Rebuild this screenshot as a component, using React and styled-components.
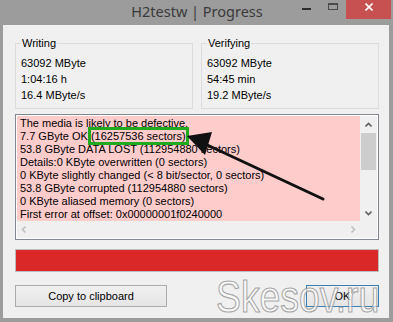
import React from 'react';
import styled, { createGlobalStyle } from 'styled-components';

const Global = createGlobalStyle`
  html, body {
    margin: 0;
    padding: 0;
    background: #9c9c9c;
  }
  * {
    box-sizing: border-box;
  }
`;

const Frame = styled.div`
  position: relative;
  width: 393px;
  height: 322px;
  background: #9c9c9c;
  display: flex;
  flex-direction: column;
  padding: 0 4px 4px 3px;
  font-family: "Liberation Sans", Arial, sans-serif;
  font-size: 11px;
  color: #000;
  overflow: hidden;
`;

const TitleBar = styled.div`
  height: 25px;
  margin-right: -2px;
  display: grid;
  grid-template-columns: 1fr auto 1fr;
  align-items: start;
`;

const Title = styled.div`
  grid-column: 2;
  font-family: "Noto Sans", "Open Sans", sans-serif;
  font-size: 14.5px;
  line-height: 23px;
  color: #3a3a3a;
`;

const Controls = styled.div`
  grid-column: 3;
  justify-self: end;
  display: flex;
`;

const CtrlButton = styled.div`
  width: ${p => p.$w}px;
  height: 19px;
  display: flex;
  justify-content: center;
  padding-top: 3px;
  background: ${p => (p.$close ? '#c75050' : 'transparent')};
`;

const Client = styled.div`
  flex: 1;
  background: #f0f0f0;
  display: flex;
  flex-direction: column;
  padding: 11px 10px 0 12px;
`;

const Groups = styled.div`
  display: grid;
  grid-template-columns: 1fr 1fr;
  gap: 8px;
`;

const Group = styled.fieldset`
  margin: 0;
  min-width: 0;
  padding: 5px 5px 5px 5px;
  border: 1px solid #dcdcdc;
`;

const Legend = styled.legend`
  padding: 0 1px;
  line-height: 14px;
`;

const Value = styled.div`
  line-height: 16px;
  white-space: nowrap;
`;

const Report = styled.div`
  margin-top: 5px;
  height: 126px;
  border: 1px solid #828790;
  background: #fff;
  padding: 1px;
  display: grid;
  grid-template-columns: 1fr 17px;
  grid-template-rows: 1fr 17px;
`;

const ReportText = styled.div`
  background: #ffcccc;
  padding: 1px 0 0 3px;
  line-height: 13px;
  white-space: nowrap;
  overflow: hidden;
`;

const Marked = styled.span`
  outline: 3px solid #1faa1f;
  outline-offset: 0;
`;

const VScroll = styled.div`
  background: #f0f0f0;
  display: flex;
  flex-direction: column;
`;

const ArrowCell = styled.div`
  height: 17px;
  display: flex;
  align-items: center;
  justify-content: center;
`;

const Thumb = styled.div`
  height: 37px;
  margin: 0 1px;
  background: #cdcdcd;
`;

const Spacer = styled.div`
  flex: 1;
`;

const HScroll = styled.div`
  background: #f0f0f0;
  display: flex;
  justify-content: space-between;
  align-items: center;
  padding: 0 4px 0 4px;
`;

const Corner = styled.div`
  background: #f0f0f0;
`;

const Progress = styled.div`
  margin-top: 9px;
  height: 23px;
  border: 1px solid #bcbcbc;
  background: #da2727;
`;

const Buttons = styled.div`
  margin-top: 13px;
  display: flex;
  justify-content: space-between;
`;

const Button = styled.div`
  width: ${p => p.$w}px;
  height: 22px;
  display: flex;
  align-items: center;
  justify-content: center;
  border: 1px solid ${p => (p.$default ? '#3c7fb1' : '#acacac')};
  background: linear-gradient(#f0f0f0, #e5e5e5);
  font-size: 11px;
`;

const Watermark = styled.div`
  position: absolute;
  left: 216px;
  top: 274px;
  font-family: "Liberation Sans", Arial, sans-serif;
  font-size: 45px;
  line-height: 1;
  color: rgba(255, 255, 255, 0.6);
  -webkit-text-stroke: 1.2px rgba(140, 140, 140, 0.75);
  transform: scaleX(0.83);
  transform-origin: left top;
  pointer-events: none;
`;

const Overlay = styled.svg`
  position: absolute;
  left: 0;
  top: 0;
  pointer-events: none;
`;

const Chevron = ({ dir, color }) => {
  const pts = {
    up: '0.5,4.5 3.5,1.5 6.5,4.5',
    down: '0.5,1.5 3.5,4.5 6.5,1.5',
    left: '4.5,0.5 1.5,3.5 4.5,6.5',
    right: '1.5,0.5 4.5,3.5 1.5,6.5',
  }[dir];
  const vertical = dir === 'up' || dir === 'down';
  return (
    <svg width={vertical ? 7 : 6} height={vertical ? 6 : 7}>
      <polyline points={pts} fill="none" stroke={color} strokeWidth="1.6" />
    </svg>
  );
};

const lines = [
  'The media is likely to be defective.',
  null,
  '53.8 GByte DATA LOST (112954880 sectors)',
  'Details:0 KByte overwritten (0 sectors)',
  '0 KByte slightly changed (< 8 bit/sector, 0 sectors)',
  '53.8 GByte corrupted (112954880 sectors)',
  '0 KByte aliased memory (0 sectors)',
  'First error at offset: 0x00000001f0240000',
];

export default function App() {
  return (
    <Frame>
      <Global />
      <TitleBar>
        <Title>H2testw | Progress</Title>
        <Controls>
          <CtrlButton $w={26}>
            <svg width="9" height="7"><rect x="0" y="5" width="9" height="2" fill="#2b2b2b" /></svg>
          </CtrlButton>
          <CtrlButton $w={27}>
            <svg width="10" height="7">
              <rect x="0.5" y="0.5" width="9" height="6" fill="none" stroke="#4a4a4a" />
              <rect x="0" y="0" width="10" height="2" fill="#4a4a4a" />
            </svg>
          </CtrlButton>
          <CtrlButton $w={45} $close>
            <svg width="8" height="8">
              <path d="M0.5 0.5 L7.5 7.5 M7.5 0.5 L0.5 7.5" stroke="#fff" strokeWidth="1.6" />
            </svg>
          </CtrlButton>
        </Controls>
      </TitleBar>

      <Client>
        <Groups>
          <Group>
            <Legend>Writing</Legend>
            <Value>63092 MByte</Value>
            <Value>1:04:16 h</Value>
            <Value>16.4 MByte/s</Value>
          </Group>
          <Group>
            <Legend>Verifying</Legend>
            <Value>63092 MByte</Value>
            <Value>54:45 min</Value>
            <Value>19.2 MByte/s</Value>
          </Group>
        </Groups>

        <Report>
          <ReportText>
            {lines.map((l, i) =>
              l === null ? (
                <div key={i}>
                  7.7 GByte OK <Marked>(16257536 sectors)</Marked>
                </div>
              ) : (
                <div key={i}>{l}</div>
              )
            )}
          </ReportText>
          <VScroll>
            <ArrowCell><Chevron dir="up" color="#606060" /></ArrowCell>
            <Thumb />
            <Spacer />
            <ArrowCell><Chevron dir="down" color="#606060" /></ArrowCell>
          </VScroll>
          <HScroll>
            <Chevron dir="left" color="#c0c0c0" />
            <Chevron dir="right" color="#c0c0c0" />
          </HScroll>
          <Corner />
        </Report>

        <Progress />

        <Buttons>
          <Button $w={152}>Copy to clipboard</Button>
          <Button $w={73} $default>OK</Button>
        </Buttons>
      </Client>

      <Overlay width="393" height="322">
        <line x1="323" y1="199" x2="203" y2="143" stroke="#111" strokeWidth="3" strokeLinecap="round" />
        <polygon points="187,136 212,132 205,155" fill="#111" />
      </Overlay>
      <Watermark>Skesov.ru</Watermark>
    </Frame>
  );
}
